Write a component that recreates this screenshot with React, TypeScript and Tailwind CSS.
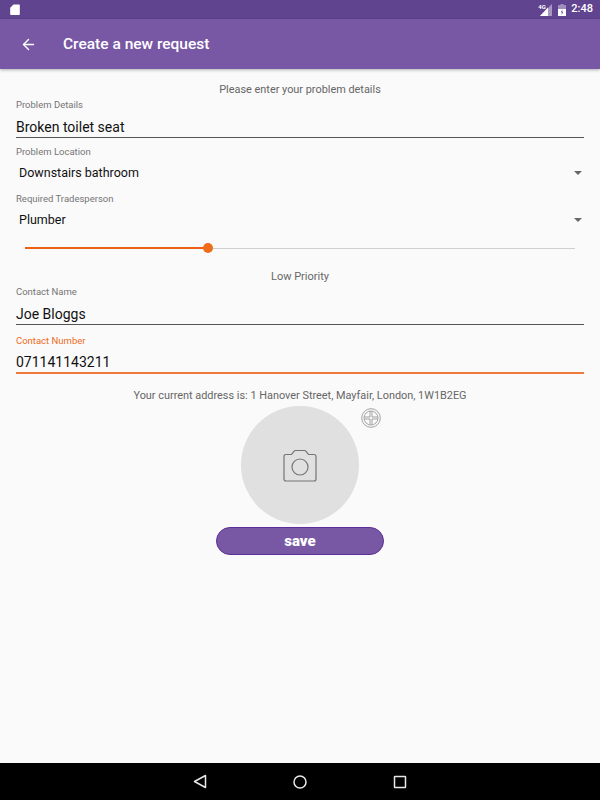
import { ArrowLeft } from "lucide-react";

function Dropdown({ label, value }: { label: string; value: string }) {
  return (
    <div className="h-[47px]">
      <div className="h-[18px] px-4 pt-[1px] text-[9.5px] leading-[18px] text-[#757575]">{label}</div>
      <div className="flex h-[26px] items-center justify-between pl-[19px] pr-[18px] text-[12.5px] text-[#111]">
        <span>{value}</span>
        <span className="h-0 w-0 border-x-4 border-t-4 border-x-transparent border-t-[#666]" />
      </div>
    </div>
  );
}

function TextInput({ label, value, focused }: { label: string; value: string; focused?: boolean }) {
  return (
    <div className="px-4">
      <div className={`h-[14px] text-[9.5px] leading-[14px] ${focused ? "text-[#ee6c1a]" : "text-[#757575]"}`}>{label}</div>
      <div className={`flex h-[26px] items-center text-[14px] text-[#111] ${focused ? "border-b-2 border-[#ee7a3a] pt-[5px]" : "border-b border-[#555] pt-[5px]"}`}>
        {value}
      </div>
    </div>
  );
}

export default function App() {
  return (
    <div className="flex h-[800px] w-[600px] flex-col overflow-hidden bg-[#fafafa] font-['Roboto',sans-serif]">
      <div className="flex h-[19px] items-center justify-between bg-[#61448f] pl-[10px] pr-[7px] text-white">
        <svg width="10" height="11" viewBox="0 0 10 11" fill="white">
          <path d="M3.5 0.5H9a.8.8 0 0 1 .8.8v8.9a.8.8 0 0 1-.8.8H1a.8.8 0 0 1-.8-.8V3.8z" />
        </svg>
        <div className="flex items-center">
          <div className="relative h-[12px] w-[14px]">
            <svg width="14" height="12" viewBox="0 0 14 12" fill="white">
              <path d="M14 0V12H2z" opacity="0.45" />
              <path d="M10 3.500V12H2z" />
            </svg>
            <span className="absolute -top-[1px] left-0 text-[6px] leading-[7px] font-bold">4G</span>
          </div>
          <svg className="ml-[6px]" width="8" height="12" viewBox="0 0 8 12" fill="white">
            <path d="M2.5 0h3v1H7.500a.5.5 0 0 1 .5.5V12H0V1.500a.5.5 0 0 1 .5-.5h2z" opacity="0.4" />
            <path d="M0 5H8V11.500a.5.5 0 0 1-.5.5H.5a.5.5 0 0 1-.5-.5z" />
            <path d="M4.500 5.500L2.800 8.500H4L3.500 11L5.300 7.800H4.100z" fill="#61448f" />
          </svg>
          <span className="ml-[5px] text-[11px] font-medium">2:48</span>
        </div>
      </div>

      <header className="z-10 flex h-[50px] items-center bg-[#7858a4] pl-[20px] shadow-[0_1px_3px_rgba(0,0,0,0.3)]">
        <ArrowLeft className="h-[17px] w-[17px] text-white" strokeWidth={2} />
        <h1 className="ml-[26px] pt-[1px] text-[15.5px] font-medium text-white">Create a new request</h1>
      </header>

      <main className="flex flex-1 flex-col pt-[14px]">
        <p className="h-[15px] text-center text-[10.9px] leading-[14px] text-[#666]">Please enter your problem details</p>
        <TextInput label="Problem Details" value="Broken toilet seat" />
        <div className="h-[4px]" />
        <Dropdown label="Problem Location" value="Downstairs bathroom" />
        <Dropdown label="Required Tradesperson" value="Plumber" />
        <div className="mx-[25px] mt-[6px] flex h-[12px] items-center">
          <div className="h-[2px] w-[183px] bg-[#ee5f14]" />
          <div className="h-[10px] w-[10px] shrink-0 -translate-x-[5px] rounded-full bg-[#ee6c1a]" />
          <div className="-ml-[10px] h-[1px] flex-1 bg-[#cfcfcf]" />
        </div>
        <p className="mt-[16px] mb-[1px] text-center text-[11px] leading-[14px] text-[#666]">Low Priority</p>
        <TextInput label="Contact Name" value="Joe Bloggs" />
        <div className="h-[9px]" />
        <TextInput label="Contact Number" value="071141143211" focused />
        <p className="mt-[15px] mb-[-1px] text-center text-[10.9px] leading-[14px] text-[#666]">
          Your current address is: 1 Hanover Street, Mayfair, London, 1W1B2EG
        </p>
        <div className="relative mx-auto mt-[4px] flex h-[118px] w-[118px] items-center justify-center rounded-full bg-[#e0e0e0]">
          <svg width="34" height="33" viewBox="0 0 34 33" fill="none" stroke="#757575" strokeWidth="1.200">
            <path d="M3 5.500H8.500L11 2.300Q11.600 1.500 12.500 1.500H21.500Q22.400 1.500 23 2.300L25.500 5.500H31Q33 5.500 33 7.500V30Q33 32 31 32H3Q1 32 1 30V7.500Q1 5.500 3 5.500z" />
            <circle cx="17" cy="18" r="8" />
          </svg>
          <svg className="absolute top-[2px] -right-[22px]" width="20" height="20" viewBox="0 0 20 20" fill="none" stroke="#8a8a8a" strokeWidth="0.8">
            <circle cx="10" cy="10" r="9.300" />
            <circle cx="10" cy="10" r="7" />
            <path d="M3.500 9H9V3.500M11 3.500V9H16.500M16.500 11H11V16.500M9 16.500V11H3.500" />
          </svg>
        </div>
        <button className="mx-auto mt-[3px] h-[28px] w-[168px] rounded-full border border-[#5b2f98] bg-[#7858a4] text-[15px] font-black text-white">
          save
        </button>
      </main>

      <nav className="flex h-[37px] items-center justify-center gap-[86px] bg-black">
        <svg width="14" height="15" viewBox="0 0 14 15" fill="none" stroke="#e8e8e8" strokeWidth="1.500">
          <path d="M12.500 1.500V13.500L1.500 7.500z" strokeLinejoin="round" />
        </svg>
        <svg width="14" height="14" viewBox="0 0 14 14" fill="none" stroke="#e8e8e8" strokeWidth="1.500">
          <circle cx="7" cy="7" r="6" />
        </svg>
        <svg width="14" height="14" viewBox="0 0 14 14" fill="none" stroke="#e8e8e8" strokeWidth="1.500">
          <rect x="1.500" y="1.500" width="11" height="11" rx="0.5" />
        </svg>
      </nav>
    </div>
  );
}
